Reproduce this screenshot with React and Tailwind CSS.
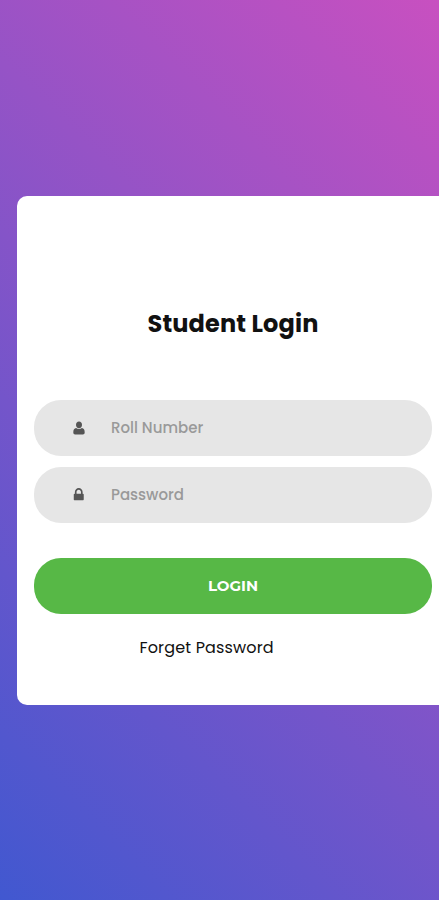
import React from 'react';

const UserIcon = () => (
  <svg viewBox="0 0 12 14" className="ml-[2px] w-3 h-3.5" fill="currentColor" aria-hidden="true">
    <path d="M6 .6C7.9.6 9 2 9 3.9S7.8 7.2 6 7.2 3 5.8 3 3.9 4.1.6 6 .6z" />
    <path d="M3.1 7C3.9 7.7 4.9 8 6 8s2.1-.3 2.9-1c1.8.2 2.8 1.700 2.8 4.400 0 1.300-.700 2-1.800 2H2.100c-1.100 0-1.800-.700-1.800-2C.3 8.700 1.300 7.200 3.100 7z" />
  </svg>
);

const LockIcon = () => (
  <svg viewBox="0 0 1792 1792" className="w-[15.5px] h-[15.5px]" fill="currentColor" aria-hidden="true">
    <path d="M640 768h512v-192q0-106-75-181t-181-75-181 75-75 181v192zm832 96v576q0 40-28 68t-68 28h-960q-40 0-68-28t-28-68v-576q0-40 28-68t68-28h32v-192q0-184 132-316t316-132 316 132 132 316v192h32q40 0 68 28t28 68z" />
  </svg>
);

const InputField = ({ icon, type, placeholder }) => (
  <label className="flex items-center h-14 rounded-[27px] bg-[#e6e6e6] pl-[37px] text-[#555555]">
    <span className="w-10 shrink-0">{icon}</span>
    <input
      type={type}
      placeholder={placeholder}
      className="min-w-0 flex-1 bg-transparent text-[15px] font-medium outline-none placeholder:text-[#999999]"
    />
  </label>
);

const App = () => {
  return (
    <div className="h-[900px] w-full overflow-hidden bg-[linear-gradient(225deg,#c850c0,#4158d0)] pt-[196px] pl-[17px] font-['Poppins','Inter',sans-serif]">
      {/* Card runs past the right edge of narrow screens */}
      <div className="w-[432px] h-[509px] rounded-[10px] bg-white pl-[17px]">
        <form className="w-[398px] flex flex-col" onSubmit={(e) => e.preventDefault()}>
          <h1 className="pt-[110px] text-center text-2xl leading-9 font-bold tracking-[0.15px] text-[#111111]">
            Student Login
          </h1>

          <div className="mt-[58px] flex flex-col gap-[11px]">
            <InputField icon={<UserIcon />} type="text" placeholder="Roll Number" />
            <InputField icon={<LockIcon />} type="password" placeholder="Password" />
          </div>

          <button
            type="submit"
            className="mt-[35px] h-14 rounded-[27px] bg-[#57b846] font-['Montserrat','Inter',sans-serif] text-[15px] font-bold text-white"
          >
            LOGIN
          </button>

          <a href="#forgot" className="mt-[22px] ml-[105.5px] self-start text-base leading-6 tracking-[0.15px] whitespace-nowrap text-[#111111]">
            Forget Password
          </a>
        </form>
      </div>
    </div>
  );
};

export default App;
